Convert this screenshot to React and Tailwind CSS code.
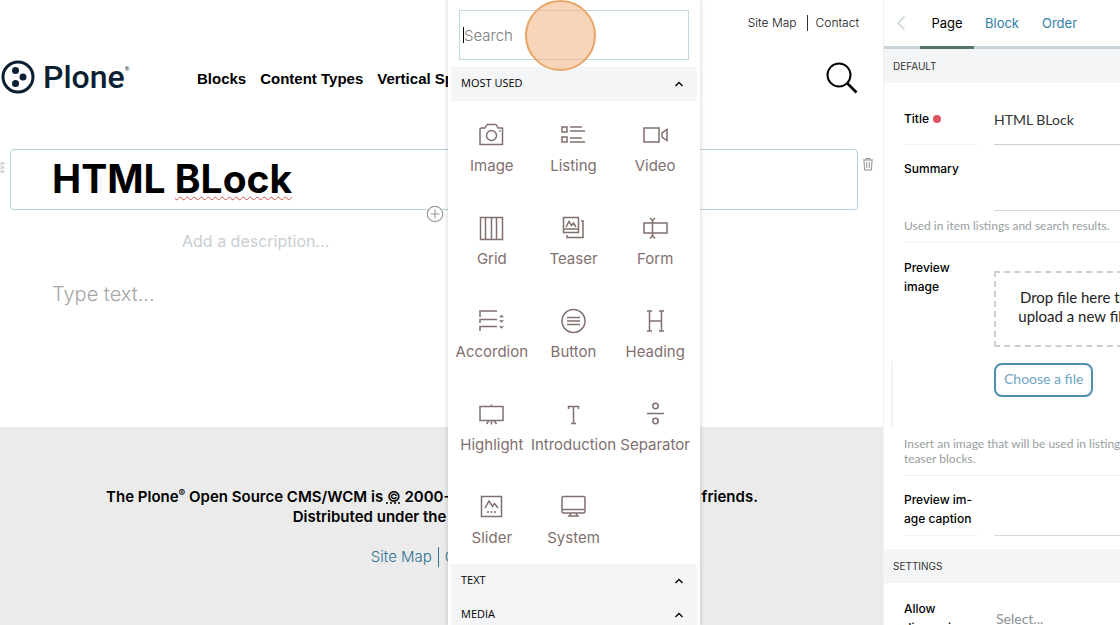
import React from "react";

const iconPaths = {
  Image: (
    <>
      <path d="M7 10h4l2-3.500h9l2 3.500h4.500v16.500h-22.500V11z" strokeLinejoin="round" />
      <circle cx="17.500" cy="17.500" r="5" />
      <path d="M25 13h1.500" />
    </>
  ),
  Listing: (
    <>
      <path d="M6 9h5v5H6zM6 19h5v5H6zM14 9h12M14 13h15M14 20h12M14 24h15" />
    </>
  ),
  Video: <path d="M6 10h15v14H6zM29 11.500v11l-5-3.500v-4z" />,
  Grid: <path d="M6.500 6.500h22v22h-22zM11.500 6.500v22M17.500 6.500v22M22.500 6.500v22" />,
  Teaser: (
    <path d="M7.500 6.500h15v15h-15zM7.500 18h15M10 16l3-5.500 2.500 4 2-2.500 2.500 4M25 10h2v16.500H11v-2.500" />
  ),
  Form: <path d="M6 12h23v10H6zM14.500 9v16M12 7l2.500 2.500 2.500-2.500M12 27.500l2.500-3 2.500 3" />,
  Accordion: (
    <>
      <path d="M6 13V7h17M6 19v-3.500h17M6 27v-4.500h17" />
      <path d="M25.500 13l2-2 2 2zM25.500 16.500l2 2 2-2zM25.500 22.500l2 2 2-2z" fill="currentColor" strokeWidth="0.500" />
    </>
  ),
  Button: (
    <>
      <circle cx="17.500" cy="17" r="11.500" />
      <path d="M11 13.500h13M11 17h13M11 20.500h13" />
    </>
  ),
  Heading: <path d="M11.500 7v20M23.500 7v20M11.500 17h12M9 7h5M21 7h5M9 27h5M21 27h5" />,
  Highlight: (
    <path d="M6 9.500h23v14H6zM17.500 7.500v2M17.500 23.500v4M15 23.500l-2.500 3.500M20 23.500l2.500 3.500" />
  ),
  Introduction: <path d="M12.500 12V9.500h10V12M17.500 9.500v17M15 26.500h5" />,
  Separator: (
    <>
      <path d="M9 16.500h17" />
      <circle cx="17.500" cy="9" r="2.700" />
      <circle cx="17.500" cy="24" r="2.700" />
    </>
  ),
  Slider: (
    <path d="M7.500 6.500h20v20h-20zM11 18l4-7 3.500 5.500 2-3 3.500 4.500M13 22h2M16.500 22h2M20 22h2" />
  ),
  System: (
    <>
      <rect x="6" y="6.500" width="23" height="16.500" rx="1.500" />
      <path d="M6 19.500h23M15 23l-1 2.500M20 23l1 2.500M12 26h11" />
    </>
  ),
};

function BlockButton({ name }) {
  return (
    <button type="button" className="flex flex-col items-center gap-0.5 whitespace-nowrap text-[#826f6f]">
      <svg viewBox="0 0 35 34" className="h-[34px] w-[35px]" fill="none" stroke="currentColor" strokeWidth="1.500" aria-hidden="true">
        {iconPaths[name]}
      </svg>
      <span className="text-[15px] leading-6">{name}</span>
    </button>
  );
}

function GroupHeader({ children }) {
  return (
    <button type="button" className="flex h-[34px] w-full items-center justify-between bg-[#f3f5f7] pr-3 pb-px pl-2.5 font-['Open_Sans',sans-serif] text-[11px] text-black">
      {children}
      <svg viewBox="0 0 12 12" className="h-3 w-3" fill="none" stroke="currentColor" strokeWidth="1.300" aria-hidden="true">
        <path d="M2.500 8l3.500-3.500 3.500 3.500" />
      </svg>
    </button>
  );
}

function BlockChooser() {
  return (
    <div className="absolute top-0 left-[448px] z-10 h-full w-[252px] overflow-hidden bg-white pr-[3px] pl-[3px] shadow-[0_0_5px_rgba(0,0,0,0.2)]">
      <div className="px-2 pt-2.5 pb-[7px]">
        <input
          type="text"
          aria-label="Search blocks"
          placeholder="Search"
          className="block h-[50px] w-full border border-[#c3d8e1] px-1 text-[15px] font-light outline-none placeholder:text-[#7c7c7c]"
        />
      </div>
      <span className="absolute top-[27px] left-[15px] h-4 w-px bg-black" />
      <GroupHeader>MOST USED</GroupHeader>
      <div className="grid grid-cols-3 justify-items-center gap-y-[33px] pt-[17px] pr-px pb-3.5">
        {Object.keys(iconPaths).map((name) => (
          <BlockButton key={name} name={name} />
        ))}
      </div>
      <GroupHeader>TEXT</GroupHeader>
      <GroupHeader>MEDIA</GroupHeader>
      <span className="pointer-events-none absolute top-0 left-[77px] h-[71px] w-[71px] rounded-full border-2 border-[#e8a668] bg-[#f3b27e]/55" />
    </div>
  );
}

function Header() {
  return (
    <header className="pr-6">
      <nav aria-label="Tools" className="flex items-center justify-end pt-[15px] text-[12px] font-light text-[#111]">
        <a href="#sitemap" className="border-r border-[#333] pr-2.5 leading-4">Site Map</a>
        <a href="#contact" className="pl-2 leading-4">Contact</a>
      </nav>
      <div className="flex items-center pt-[26px]">
        <a href="#home" className="flex w-[197px] items-center gap-2 pl-px text-[#0b1f33]" aria-label="Plone">
          <svg viewBox="0 0 34 34" className="h-[34px] w-[34px]" fill="currentColor" aria-hidden="true">
            <circle cx="17" cy="17" r="15" fill="none" stroke="currentColor" strokeWidth="3" />
            <circle cx="14.500" cy="10.500" r="3.500" />
            <circle cx="22" cy="17" r="3.500" />
            <circle cx="14.500" cy="23.500" r="3.500" />
          </svg>
          <span className="flex font-['Roboto',sans-serif] text-[32px] leading-10 font-medium">
            Plone<sup className="top-0 pt-1.5 text-[6px] leading-3">®</sup>
          </span>
        </a>
        <nav aria-label="Main" className="flex gap-3.5 pt-1 font-['Liberation_Sans',sans-serif] text-[15px] font-bold whitespace-nowrap text-black">
          <a href="#blocks">Blocks</a>
          <a href="#content-types">Content Types</a>
          <a href="#vertical-spacing">Vertical Spacing</a>
        </nav>
        <button type="button" aria-label="Search" className="ml-auto pt-0.5">
          <svg viewBox="0 0 34 34" className="h-[34px] w-[34px]" fill="none" stroke="black" strokeWidth="2" aria-hidden="true">
            <circle cx="14" cy="14" r="11.500" />
            <path d="M22 22l9.500 9.500" strokeWidth="2.600" />
          </svg>
        </button>
      </div>
    </header>
  );
}

function Editor() {
  return (
    <section className="flex-none pt-[52px]">
      <div className="flex items-start">
        <button type="button" aria-label="Drag block" className="mt-3 w-2.5">
          <svg viewBox="0 0 10 14" className="h-3.5 w-2.5" fill="none" stroke="#c0c7cc" aria-hidden="true">
            <circle cx="0.500" cy="2.500" r="1" /><circle cx="3" cy="2.500" r="1" />
            <circle cx="0.500" cy="6.500" r="1" /><circle cx="3" cy="6.500" r="1" />
            <circle cx="0.500" cy="10.500" r="1" /><circle cx="3" cy="10.500" r="1" />
          </svg>
        </button>
        <div className="relative h-[61px] flex-1 rounded-sm border border-[#b3d2dc] pl-[41px]">
          <h1 className="text-[39px] leading-[58px] font-bold text-black">
            HTML <span className="underline decoration-[#d0504a] decoration-wavy decoration-1 underline-offset-3">BLock</span>
          </h1>
          <button type="button" aria-label="Add block" className="absolute -bottom-3.5 left-1/2 -ml-2 rounded-full bg-white">
            <svg viewBox="0 0 18 18" className="h-[18px] w-[18px]" fill="none" stroke="#9a9a9a" strokeWidth="1.200" aria-hidden="true">
              <circle cx="9" cy="9" r="7.700" />
              <path d="M9 4.500v9M4.500 9h9" />
            </svg>
          </button>
        </div>
        <button type="button" aria-label="Delete block" className="mr-[9px] ml-1 pt-2">
          <svg viewBox="0 0 12 14" className="h-3.5 w-3" fill="none" stroke="#8f8f8f" aria-hidden="true">
            <path d="M1 3h10M4 3V1.500h4V3M2 3l.5 10h7l.5-10M4.700 5v6M7.300 5v6" />
          </svg>
        </button>
      </div>
      <p className="pt-[19px] pl-[182px] text-base leading-6 text-[#c9ced2]">Add a description...</p>
      <p className="pt-[27px] pl-[52px] text-xl leading-7 font-light text-[#a5a5a5]">Type text...</p>
    </section>
  );
}

function Footer() {
  return (
    <footer className="mt-[119px] flex-1 bg-[#ebebeb] pt-[60px] pr-[13px] text-center">
      <p className="pr-1.5 text-[15px] leading-5 font-semibold text-black">
        The Plone<sup className="text-[10px]">®</sup> Open Source CMS/WCM is{" "}
        <abbr title="Copyright">©</abbr> 2000-2024 by the Plone Foundation and friends.
      </p>
      <p className="text-[15px] leading-5 font-semibold text-black">Distributed under the GNU GPL license.</p>
      <nav aria-label="Footer" className="flex justify-center pt-5 text-[15px] leading-5 font-light text-[#2f7396]">
        <a href="#sitemap" className="border-r border-[#2f7396] pr-1.5">Site Map</a>
        <a href="#contact" className="pl-1.5">Contact</a>
      </nav>
    </footer>
  );
}

function SectionTitle({ children }) {
  return <h2 className="h-[34px] bg-[#f3f5f7] pl-[9px] text-[10px] leading-[34px] text-[#333]">{children}</h2>;
}

function Sidebar() {
  const label = "w-[74px] flex-none text-[12px] leading-[19px] font-medium text-black";
  return (
    <aside className="w-[237px] flex-none overflow-hidden border-l border-[#edf1f2] bg-white">
      <div className="w-[270px] font-['Lato',sans-serif]">
        <div role="tablist" className="flex h-[49px] border-b-3 border-[#c7d5d8] font-['Inter',sans-serif] text-[13px] leading-[46px] text-[#2f7ea6]">
          <button type="button" aria-label="Collapse sidebar" className="w-9 pl-3">
            <svg viewBox="0 0 10 16" className="h-4 w-2.5" fill="none" stroke="#c7d1d3" strokeWidth="1.400" aria-hidden="true">
              <path d="M8.500 1.500L2 8l6.500 6.500" />
            </svg>
          </button>
          <button type="button" role="tab" aria-selected="true" className="-mb-[3px] w-[54px] border-b-3 border-[#54726c] text-black">Page</button>
          <button type="button" role="tab" className="w-14">Block</button>
          <button type="button" role="tab" className="w-[59px]">Order</button>
        </div>
        <div className="font-['Inter',sans-serif]">
          <SectionTitle>DEFAULT</SectionTitle>
        </div>
        <form className="pl-5">
          <div className="flex gap-4">
            <label htmlFor="title" className={label + " h-[62px] border-b border-[#eff1f2] pt-[26px] font-['Inter',sans-serif]"}>
              Title <span className="ml-px inline-block h-2 w-2 rounded-full bg-[#e05260]" />
            </label>
            <input id="title" defaultValue="HTML BLock" className="h-[62px] min-w-0 flex-1 border-b border-[#c7d1d3] pt-3 text-[14px] text-[#333] outline-none" />
          </div>
          <div className="flex gap-4">
            <label htmlFor="summary" className={label + " pt-3.5 font-['Inter',sans-serif]"}>Summary</label>
            <textarea id="summary" className="block h-[66px] min-w-0 flex-1 resize-none border-b border-[#d3dadc] outline-none" />
          </div>
          <p className="border-b border-[#eff1f2] pt-1.5 pb-2 text-[12px] leading-[17px] whitespace-nowrap text-[#999ea0]">Used in item listings and search results.</p>
          <div className="flex gap-4 pt-[15px]">
            <label htmlFor="preview" className={label + " font-['Inter',sans-serif]"}>Preview image</label>
            <div className="flex-1 pt-[13px]">
              <div className="flex h-[76px] items-center justify-center border-2 border-dashed border-[#c7d1d3] pb-1 text-center text-[15px] leading-[19px] whitespace-nowrap text-[#222]">
                Drop file here to
                <br />
                upload a new file
              </div>
              <button id="preview" type="button" className="mt-4 h-[34px] rounded-lg border-2 border-[#4e8fb0] px-2 pb-1 text-[14px] text-[#6fa5c1]">Choose a file</button>
            </div>
          </div>
          <p className="border-b border-[#eff1f2] pt-[39px] pb-[9px] text-[12px] leading-[15px] whitespace-nowrap text-[#999ea0]">
            Insert an image that will be used in listing and
            <br />
            teaser blocks.
          </p>
          <div className="flex gap-4">
            <label htmlFor="caption" className={label + " border-b border-[#eff1f2] pt-3.5 pb-[7px] font-['Inter',sans-serif]"}>
              Preview im-
              <br />
              age caption
            </label>
            <input id="caption" className="min-w-0 flex-1 border-b border-[#d3dadc] outline-none" />
          </div>
        </form>
        <div className="pt-[13px] font-['Inter',sans-serif]">
          <SectionTitle>SETTINGS</SectionTitle>
        </div>
        <div className="flex gap-4 pt-4 pl-5">
          <label htmlFor="discussion" className={label + " font-['Inter',sans-serif]"}>Allow discussion</label>
          <select id="discussion" className="mt-2 flex-1 appearance-none self-start pl-0.5 text-[14px] leading-6 text-[#8b9193]">
            <option>Select...</option>
          </select>
        </div>
      </div>
    </aside>
  );
}

export default function App() {
  return (
    <div className="flex h-screen overflow-hidden bg-white font-['Inter',sans-serif]">
      <main className="relative flex min-w-0 flex-1 flex-col overflow-hidden">
        <Header />
        <Editor />
        <Footer />
        <BlockChooser />
      </main>
      <Sidebar />
      <span className="pointer-events-none absolute top-[361px] right-[227px] h-[65px] w-0.5 bg-[#eff5fa]" />
    </div>
  );
}
